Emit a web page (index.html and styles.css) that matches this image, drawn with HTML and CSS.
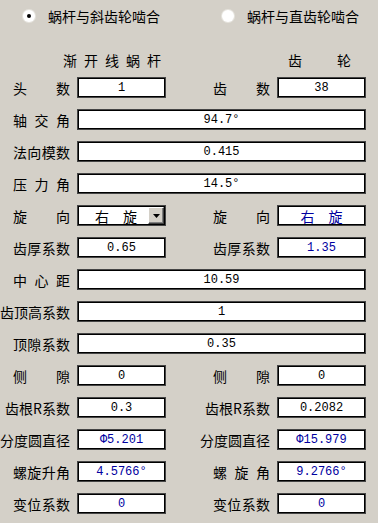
FILE: index.html
```html
<!DOCTYPE html>
<html lang="zh">
<head>
<meta charset="utf-8">
<title>蜗杆参数</title>
<link rel="stylesheet" href="styles.css">
</head>
<body>
<div class="radios">
  <label class="radio-item first"><span class="radio checked"></span><span>蜗杆与斜齿轮啮合</span></label>
  <label class="radio-item"><span class="radio"></span><span>蜗杆与直齿轮啮合</span></label>
</div>
<div class="heads">
  <div class="h-left"><span>渐</span><span>开</span><span>线</span><span>蜗</span><span>杆</span></div>
  <div class="h-right"><span>齿</span><span>轮</span></div>
</div>
<div class="form">
  <div class="lbl">头数</div><div class="box">1</div>
  <div class="lbl">齿数</div><div class="box">38</div>

  <div class="lbl">轴交角</div><div class="box wide">94.7°</div>
  <div class="lbl">法向模数</div><div class="box wide">0.415</div>
  <div class="lbl">压力角</div><div class="box wide">14.5°</div>

  <div class="lbl">旋向</div>
  <div class="box select"><span class="sel-text">右　旋</span><span class="drop"><svg width="7" height="4" viewBox="0 0 7 4"><polygon points="0,0 7,0 3.5,4" fill="#000"/></svg></span></div>
  <div class="lbl">旋向</div><div class="box cjk blue">右　旋</div>

  <div class="lbl">齿厚系数</div><div class="box">0.65</div>
  <div class="lbl">齿厚系数</div><div class="box blue">1.35</div>

  <div class="lbl">中心距</div><div class="box wide">10.59</div>
  <div class="lbl">齿顶高系数</div><div class="box wide">1</div>
  <div class="lbl">顶隙系数</div><div class="box wide">0.35</div>

  <div class="lbl">侧隙</div><div class="box">0</div>
  <div class="lbl">侧隙</div><div class="box">0</div>

  <div class="lbl">齿根R系数</div><div class="box">0.3</div>
  <div class="lbl">齿根R系数</div><div class="box">0.2082</div>

  <div class="lbl">分度圆直径</div><div class="box blue">Φ5.201</div>
  <div class="lbl">分度圆直径</div><div class="box blue">Φ15.979</div>

  <div class="lbl">螺旋升角</div><div class="box blue">4.5766°</div>
  <div class="lbl">螺旋角</div><div class="box blue">9.2766°</div>

  <div class="lbl">变位系数</div><div class="box blue">0</div>
  <div class="lbl">变位系数</div><div class="box blue">0</div>
</div>
</body>
</html>
```
FILE: styles.css
```css
html, body {
  margin: 0;
  padding: 0;
}
body {
  width: 378px;
  height: 523px;
  overflow: hidden;
  background: #d4d0c8;
  color: #000;
  font-family: "Noto Sans CJK SC", "Noto Sans", sans-serif;
  font-size: 14px;
  line-height: 1;
}
.radios {
  display: grid;
  grid-template-columns: 222px auto;
  height: 32px;
  align-items: center;
}
.radio-item {
  display: flex;
  align-items: center;
  gap: 13px;
  white-space: nowrap;
}
.radio-item.first {
  padding-left: 23px;
}
.radio {
  width: 12px;
  height: 12px;
  border-radius: 50%;
  background: #fff;
  box-shadow: 0 0 0 1px #e6e4de;
  display: flex;
  align-items: center;
  justify-content: center;
}
.radio.checked::after {
  content: "";
  width: 4px;
  height: 4px;
  border-radius: 50%;
  background: #000;
}
.heads {
  display: flex;
  height: 20px;
  margin-top: 18px;
  align-items: center;
  white-space: nowrap;
}
.h-left {
  display: flex;
  gap: 7px;
  margin-left: 63px;
  width: 225px;
  flex: none;
}
.h-right {
  display: flex;
  gap: 35px;
  flex: none;
}
.form {
  display: grid;
  grid-template-columns: 70px 89px 97px 89px;
  column-gap: 7px;
  row-gap: 11px;
  grid-auto-rows: 21px;
  margin-top: 7px;
}
.lbl {
  justify-self: end;
  align-self: center;
  min-width: 57px;
  text-align-last: justify;
  white-space: nowrap;
}
.box {
  box-sizing: border-box;
  background: #fff;
  border: 1px solid #454545;
  box-shadow: inset 0 0 0 1px #000;
  display: flex;
  align-items: center;
  justify-content: center;
  font-family: "Liberation Mono", monospace;
  font-size: 12px;
  white-space: nowrap;
}
.wide {
  grid-column: 2 / 5;
}
.blue {
  color: #0000a0;
}
.cjk {
  font-family: "Noto Sans CJK SC", sans-serif;
  font-size: 14px;
}
.select {
  justify-content: flex-start;
  padding-left: 17px;
}
.sel-text {
  font-family: "Noto Sans CJK SC", sans-serif;
  font-size: 14px;
  flex: 1;
}
.drop {
  box-sizing: border-box;
  align-self: stretch;
  width: 16px;
  margin: 1px;
  background: #d4d0c8;
  border: 1px solid;
  border-color: #fff #404040 #404040 #fff;
  box-shadow: inset -1px -1px 0 #808080;
  display: flex;
  align-items: center;
  justify-content: center;
}
.drop svg {
  display: block;
}
```
